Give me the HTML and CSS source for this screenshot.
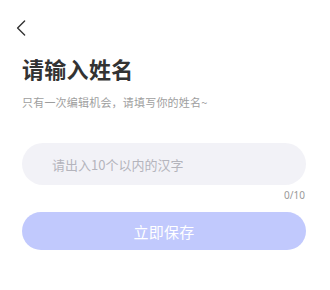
FILE: index.html
```html
<!DOCTYPE html>
<html lang="zh">
<head>
<meta charset="utf-8">
<title>请输入姓名</title>
<link rel="stylesheet" href="styles.css">
</head>
<body>
<div class="page">
  <a class="back" href="#" aria-label="返回">
    <svg width="10" height="16" viewBox="0 0 10 16"><path d="M8.6 1 L1.6 8 L8.6 15" fill="none" stroke="#333" stroke-width="1.4" stroke-linecap="round" stroke-linejoin="round"/></svg>
  </a>
  <h1 class="title">请输入姓名</h1>
  <p class="subtitle">只有一次编辑机会，请填写你的姓名~</p>
  <div class="field">
    <input class="input" type="text" placeholder="请出入10个以内的汉字" maxlength="10">
  </div>
  <div class="counter">0/10</div>
  <button class="save" type="button">立即保存</button>
</div>
</body>
</html>
```
FILE: styles.css
```css
* { box-sizing: border-box; }
html, body { margin: 0; padding: 0; background: #fff; }
body {
  font-family: "Noto Sans CJK SC", "Noto Sans", sans-serif;
  color: #333;
}
.page {
  display: flex;
  flex-direction: column;
  padding: 0 24px 0 22px;
}
.back {
  display: block;
  width: 10px;
  height: 16px;
  margin: 20px 0 0 -6px;
}
.back svg { display: block; }
.title {
  margin: 17px 0 0;
  font-size: 22px;
  line-height: 30px;
  font-weight: 700;
  color: #333;
  letter-spacing: 0.3px;
}
.subtitle {
  margin: 11px 0 0;
  font-size: 11px;
  line-height: 16px;
  color: #9e9e9e;
  letter-spacing: 0.2px;
}
.field {
  margin-top: 33px;
}
.input {
  display: block;
  width: 100%;
  height: 42px;
  border: none;
  outline: none;
  border-radius: 21px;
  background: #f2f2f7;
  padding: 0 0 0 30px;
  font-family: inherit;
  font-size: 13px;
  color: #333;
}
.input::placeholder { color: #b4b4bc; }
.counter {
  margin-top: 3px;
  text-align: right;
  font-family: "Noto Sans", sans-serif;
  font-size: 10px;
  line-height: 14px;
  color: #999;
  padding-right: 1px;
}
.save {
  margin-top: 10px;
  height: 38px;
  width: 100%;
  border: none;
  border-radius: 19px;
  background: #c1c9fd;
  color: #fff;
  font-family: inherit;
  font-size: 15px;
  letter-spacing: 0.3px;
}
```
